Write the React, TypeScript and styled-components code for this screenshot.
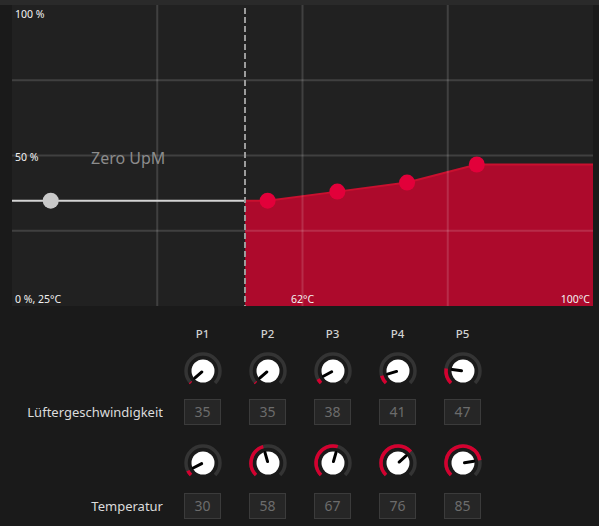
import React from 'react'
import styled, { createGlobalStyle } from 'styled-components'

const GlobalStyle = createGlobalStyle`
  html, body {
    margin: 0;
    padding: 0;
    background: #1a1a1a;
    font-family: 'Noto Sans', 'Open Sans', sans-serif;
  }
`

const Page = styled.div`
  width: 599px;
  height: 526px;
  background: #1a1a1a;
  overflow: hidden;
  border-top: 5px solid #2a2a2a;
  box-sizing: border-box;
`

const ChartBox = styled.div`
  margin-left: 12px;
  width: 581px;
  height: 301px;
  background: #212121;
  svg {
    display: block;
  }
`

const Controls = styled.div`
  padding-top: 20px;
  display: flex;
  flex-direction: column;
`

const Row = styled.div<{ $mt: number; $h: number }>`
  display: grid;
  grid-template-columns: 170px repeat(5, 65px);
  align-items: center;
  justify-items: center;
  margin-top: ${p => p.$mt}px;
  height: ${p => p.$h}px;
`

const RowLabel = styled.div`
  justify-self: end;
  padding-right: 7px;
  color: #dcdcdc;
  font-size: 13px;
`

const Head = styled.div`
  color: #d2d2d2;
  font-size: 11.5px;
  font-weight: 500;
`

const ValueBox = styled.div`
  width: 37px;
  height: 26px;
  box-sizing: border-box;
  border: 1px solid #3b3b3b;
  background: #262626;
  color: #6c6c6c;
  font-size: 14px;
  display: flex;
  align-items: center;
  justify-content: center;
`

const W = 581
const H = 301
const tx = (t: number) => ((t - 25) / 75) * W
const sy = (s: number) => H - (s / 100) * H

const points = [
  { p: 'P1', speed: 35, temp: 30 },
  { p: 'P2', speed: 35, temp: 58 },
  { p: 'P3', speed: 38, temp: 67 },
  { p: 'P4', speed: 41, temp: 76 },
  { p: 'P5', speed: 47, temp: 85 }
]

// temperature below which the fan stands still
const ZERO_X = 233

const labelStyle = { fontFamily: "'Noto Sans', sans-serif", fontSize: 10.5, fill: '#f2f2f2' }

function Chart() {
  const red = points.slice(1)
  const first = red[0]
  const last = red[red.length - 1]
  const top = [
    [ZERO_X, sy(first.speed)],
    ...red.map(r => [tx(r.temp), sy(r.speed)]),
    [W, sy(last.speed)]
  ]
  const poly = [...top, [W, H], [ZERO_X, H]].map(p => p.join(',')).join(' ')
  const line = top.map(p => p.join(',')).join(' ')
  const gridX = [1, 2, 3].map(i => (W / 4) * i)
  const gridY = [1, 2, 3].map(i => (H / 4) * i)

  return (
    <svg width={W} height={H} viewBox={`0 0 ${W} ${H}`}>
      <polygon points={poly} fill="#ad0a2c" />
      <polyline points={line} fill="none" stroke="#c9102f" strokeWidth={2} />
      {gridX.map(x => (
        <line key={x} x1={x} x2={x} y1={0} y2={H} stroke="rgba(255,255,255,0.14)" strokeWidth={2} />
      ))}
      {gridY.map(y => (
        <line key={y} x1={0} x2={W} y1={y} y2={y} stroke="rgba(255,255,255,0.14)" strokeWidth={2} />
      ))}
      <line x1={0} x2={ZERO_X} y1={sy(points[0].speed)} y2={sy(points[0].speed)} stroke="#d4d4d4" strokeWidth={2} />
      <line x1={ZERO_X} x2={ZERO_X} y1={3} y2={H} stroke="#9c9c9c" strokeWidth={2} strokeDasharray="6 3" />
      <circle cx={tx(points[0].temp)} cy={sy(points[0].speed)} r={8} fill="#c9c9c9" />
      {red.map(r => (
        <circle key={r.p} cx={tx(r.temp)} cy={sy(r.speed)} r={8} fill="#e2003a" />
      ))}
      <text x={3} y={13} style={labelStyle}>100 %</text>
      <text x={3} y={156} style={labelStyle}>50 %</text>
      <text x={3} y={298} style={labelStyle}>0 %, 25°C</text>
      <text x={279} y={298} style={labelStyle}>62°C</text>
      <text x={578} y={298} textAnchor="end" style={labelStyle}>100°C</text>
      <text x={79} y={159} style={{ ...labelStyle, fontSize: 16, fill: '#8c8c8c' }}>Zero UpM</text>
    </svg>
  )
}

function polar(cx: number, cy: number, r: number, deg: number) {
  const a = (deg * Math.PI) / 180
  return [cx + r * Math.cos(a), cy - r * Math.sin(a)]
}

function arc(cx: number, cy: number, r: number, from: number, to: number) {
  const [x1, y1] = polar(cx, cy, r, from)
  const [x2, y2] = polar(cx, cy, r, to)
  const large = from - to > 180 ? 1 : 0
  return `M ${x1} ${y1} A ${r} ${r} 0 ${large} 1 ${x2} ${y2}`
}

function Knob({ frac }: { frac: number }) {
  const c = 20
  const end = 225 - frac * 270
  const [px1, py1] = polar(c, c, 1.5, end)
  const [px2, py2] = polar(c, c, 11, end)
  return (
    <svg width={40} height={40} viewBox="0 0 40 40">
      <path d={arc(c, c, 17, 225, -45)} fill="none" stroke="#343434" strokeWidth={3.5} />
      {frac > 0.01 && (
        <path d={arc(c, c, 17, 225, end)} fill="none" stroke="#d4002f" strokeWidth={3.5} />
      )}
      <circle cx={c} cy={c} r={11.5} fill="#ffffff" />
      <line x1={px1} y1={py1} x2={px2} y2={py2} stroke="#000" strokeWidth={3} strokeLinecap="round" />
    </svg>
  )
}

const speedFrac = (v: number) => (v - 34) / 66
const tempFrac = (v: number) => (v - 25) / 75

export default function App() {
  return (
    <>
      <GlobalStyle />
      <Page>
        <ChartBox>
          <Chart />
        </ChartBox>
        <Controls>
          <Row $mt={0} $h={14}>
            <span />
            {points.map(p => (
              <Head key={p.p}>{p.p}</Head>
            ))}
          </Row>
          <Row $mt={11} $h={40}>
            <span />
            {points.map(p => (
              <Knob key={p.p} frac={speedFrac(p.speed)} />
            ))}
          </Row>
          <Row $mt={7} $h={27}>
            <RowLabel>Lüftergeschwindigkeit</RowLabel>
            {points.map(p => (
              <ValueBox key={p.p}>{p.speed}</ValueBox>
            ))}
          </Row>
          <Row $mt={18} $h={40}>
            <span />
            {points.map(p => (
              <Knob key={p.p} frac={tempFrac(p.temp)} />
            ))}
          </Row>
          <Row $mt={9} $h={27}>
            <RowLabel>Temperatur</RowLabel>
            {points.map(p => (
              <ValueBox key={p.p}>{p.temp}</ValueBox>
            ))}
          </Row>
        </Controls>
      </Page>
    </>
  )
}
